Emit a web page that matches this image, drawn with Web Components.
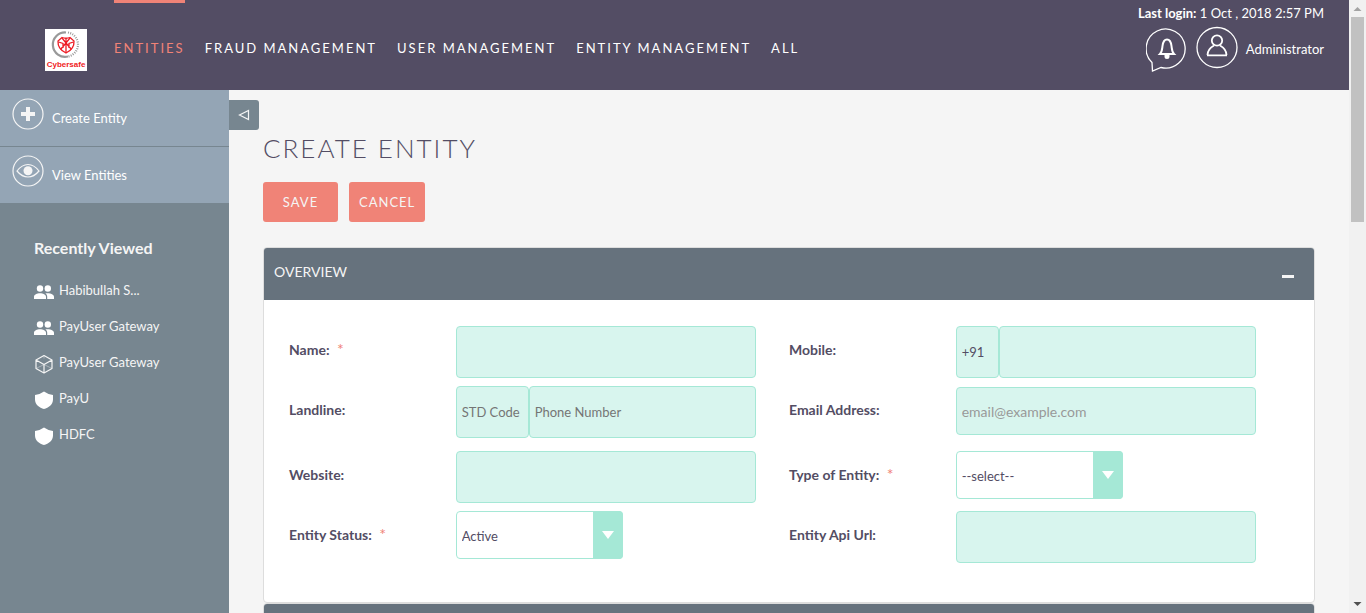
<!DOCTYPE html>
<html lang="en">
<head>
<meta charset="utf-8">
<meta name="viewport" content="width=device-width, initial-scale=1">
<title>Create Entity</title>
<style>
  html, body { margin: 0; height: 100%; }
  body {
    font: 13px/20px Lato, sans-serif;
    color: #534d64;
    background: #f5f5f5;
    overflow: hidden;
  }
</style>
</head>
<body>
<app-shell>
  <top-bar slot="header">
    <nav-link href="#entities" active>ENTITIES</nav-link>
    <nav-link href="#fraud">FRAUD MANAGEMENT</nav-link>
    <nav-link href="#users">USER MANAGEMENT</nav-link>
    <nav-link href="#entity">ENTITY MANAGEMENT</nav-link>
    <nav-link href="#all">ALL</nav-link>
  </top-bar>
  <side-bar slot="side">
    <side-action slot="actions" icon="plus" href="#create">Create Entity</side-action>
    <side-action slot="actions" icon="eye" href="#view">View Entities</side-action>
    <recent-item icon="people" href="#r1">Habibullah S...</recent-item>
    <recent-item icon="people" href="#r2">PayUser Gateway</recent-item>
    <recent-item icon="cube" href="#r3">PayUser Gateway</recent-item>
    <recent-item icon="shield" href="#r4">PayU</recent-item>
    <recent-item icon="shield" href="#r5">HDFC</recent-item>
  </side-bar>
  <entity-page>
    <action-button slot="buttons">SAVE</action-button>
    <action-button slot="buttons">CANCEL</action-button>
    <form-panel heading="OVERVIEW">
      <form-field label="Name:" name="name" required></form-field>
      <form-field label="Mobile:" name="mobile" prefix-value="+91" prefix-width="43"></form-field>
      <form-field label="Landline:" name="landline" prefix-placeholder="STD Code" prefix-width="73" placeholder="Phone Number"></form-field>
      <form-field label="Email Address:" name="email" type="email" placeholder="email@example.com"></form-field>
      <form-field label="Website:" name="website"></form-field>
      <form-field label="Type of Entity:" name="type" options="--select--" required></form-field>
      <form-field label="Entity Status:" name="status" options="Active,Inactive" required></form-field>
      <form-field label="Entity Api Url:" name="api"></form-field>
    </form-panel>
    <form-panel heading=""></form-panel>
  </entity-page>
  <scroll-track slot="scroll"></scroll-track>
</app-shell>

<script>
const ICONS = {
  plus: `<svg width="32" height="32" viewBox="0 0 32 32" fill="none" stroke="#f5f5f5"><circle cx="16" cy="16" r="15" stroke-width="1.2"/><path d="M16 9v14M9 16h14" stroke-width="4"/></svg>`,
  eye: `<svg width="32" height="32" viewBox="0 0 32 32" fill="none" stroke="#f5f5f5"><circle cx="16" cy="16" r="15" stroke-width="1.2"/><path d="M5 16Q10 9.500 16 9.500T27 16Q22 22 16 22T5 16Z" stroke-width="1.200"/><circle cx="16" cy="15.700" r="4.500" fill="#f5f5f5" stroke="none"/></svg>`,
  people: `<svg width="20" height="20" viewBox="0 0 20 20" fill="#fff"><circle cx="6" cy="6.500" r="3.200"/><circle cx="13.800" cy="6.500" r="3.200"/><path d="M0 17v-2.200C0 12.500 3 11.300 6 11.300s6 1.200 6 3.500V17zM13.200 17v-2.200c0-1.500-.7-2.500-1.900-3.200.8-.2 1.700-.3 2.500-.3 3 0 6.200 1.200 6.200 3.500V17z"/></svg>`,
  cube: `<svg width="20" height="20" viewBox="0 0 20 20" fill="none" stroke="#f5f5f5"><path d="M10 1.500 18 6v8.500L10 19l-8-4.500V6zM2 6l8 4.500L18 6M10 10.500V19" stroke-width="1.200" stroke-linejoin="round"/><path d="M2 14.500l8-4 8 4M10 1.500v3" stroke-width=".4"/></svg>`,
  shield: `<svg width="20" height="20" viewBox="0 0 20 20" fill="#fff"><path d="M10 1.500Q14.500 4.700 19 5v4.500c0 5-4.500 8.500-9 9.500-4.500-1-9-4.500-9-9.500V5q4.500-.3 9-3.500z"/></svg>`
};

function define(name, render) {
  customElements.define(name, class extends HTMLElement {
    constructor() {
      super();
      this.attachShadow({ mode: 'open' });
    }
    connectedCallback() {
      const t = document.createElement('template');
      t.innerHTML = render(this);
      this.shadowRoot.replaceChildren(t.content.cloneNode(true));
    }
  });
}

define('app-shell', () => `<style>
  :host { display: grid; grid-template-columns: minmax(0, 1fr) 17px; height: 100vh; }
  .app { display: grid; grid-template: auto minmax(0, 1fr) / 229px minmax(0, 1fr); min-height: 0; }
  header { grid-column: 1 / -1; }
  aside { display: grid; }
  main { overflow: hidden; }
</style>
<div class="app">
  <header><slot name="header"></slot></header>
  <aside><slot name="side"></slot></aside>
  <main><slot></slot></main>
</div>
<slot name="scroll"></slot>`);

define('top-bar', () => `<style>
  :host { display: flex; justify-content: space-between; height: 90px; background: #534d64; color: #fff; }
  .left { display: flex; padding-left: 45px; }
  .logo { display: block; margin: 29px 27px 0 0; height: 42px; }
  nav { display: flex; gap: 20px; }
  .right { display: flex; flex-direction: column; align-items: flex-end; padding: 3px 25px 0 0; }
  .user { display: flex; align-items: center; margin-top: 3px; }
  .user svg { display: block; }
  button { all: unset; cursor: pointer; margin-right: 8px; }
</style>
<div class="left">
  <a class="logo" href="#home" aria-label="Home">
    <svg width="42" height="42" viewBox="0 0 42 42">
      <rect width="42" height="42" fill="#fff"/>
      <path d="M21 3.500a12.200 12.200 0 1 0 2 24" fill="none" stroke="#999" stroke-width="2.200"/>
      <path d="M23 3.500a12.200 12.200 0 0 1 0 24" fill="none" stroke="#999" stroke-width="2.200" stroke-dasharray="1 1.300"/>
      <g fill="none" stroke="#ed1c24" stroke-width="1.300">
        <path d="M17 8.500q4 1.500 8 0l4 3.500q.5 8-8 12-8.500-4-8-12z"/>
        <path d="M21 9v14.500M17 9l4 5 4-5M13.500 13l4.500 1.500v4.500M28.500 13l-4.500 1.500v4.500M21 14l-5.500 6.500M21 14l5.500 6.500"/>
      </g>
      <text x="21" y="38" text-anchor="middle" font-family="Liberation Sans, sans-serif" font-weight="700" font-size="8" fill="#f01c24">Cybersafe</text>
    </svg>
  </a>
  <nav><slot></slot></nav>
</div>
<div class="right">
  <div><b>Last login:</b> 1 Oct , 2018 2:57 PM</div>
  <div class="user">
    <button aria-label="Notifications"><svg width="42" height="46" viewBox="0 0 42 46" fill="none" stroke="#fff" stroke-width="1.300">
      <path d="M6 36.500A19.500 19.500 0 1 1 15 41.500L6.500 45z"/>
      <path d="M14 28c2-2 2-4 2.500-8 .5-4 2-6.500 4.500-6.500s4 2.500 4.500 6.500c.5 4 .5 6 2.500 8z" stroke-width="2"/>
      <path d="M18.500 29h5v1.500a2.500 2.500 0 0 1-5 0z" fill="#fff" stroke="none"/>
    </svg></button>
    <button aria-label="Profile"><svg width="42" height="46" viewBox="0 0 42 46" fill="none" stroke="#fff" stroke-width="1.300">
      <circle cx="21" cy="21.500" r="20"/>
      <circle cx="21" cy="14.500" r="5.200" stroke-width="1.800"/>
      <path d="M11.500 29c0-5 3-7.500 6.500-9.500M30.500 29c0-5-3-7.500-6.500-9.500M11 29.300h20" stroke-width="1.800"/>
    </svg></button>
    <span>Administrator</span>
  </div>
</div>`);

define('nav-link', el => `<style>
  :host { display: block; }
  a { display: block; padding-top: 35px; border-top: 3px solid transparent; color: #fff; letter-spacing: 2px; text-decoration: none; white-space: nowrap; }
  :host([active]) a { color: #f08377; border-color: #f08377; }
</style><a href="${el.getAttribute('href')}"><slot></slot></a>`);

define('side-bar', () => `<style>
  :host { display: block; background: #778690; color: #f5f5f5; }
  .actions { display: grid; gap: 1px; }
  h2 { margin: 35px 34px 22px; font-size: 16px; line-height: 20px; font-weight: 700; }
  .list { display: grid; gap: 16px; padding-left: 34px; }
</style>
<div class="actions"><slot name="actions"></slot></div>
<h2>Recently Viewed</h2>
<div class="list"><slot></slot></div>`);

define('side-action', el => `<style>
  :host { display: block; background: #94a5b5; }
  a { display: flex; gap: 8px; height: 56px; padding-left: 12px; color: #fff; text-decoration: none; }
  svg { margin-top: 8px; }
  span { margin-top: 18px; }
</style><a href="${el.getAttribute('href')}">${ICONS[el.getAttribute('icon')]}<span><slot></slot></span></a>`);

define('recent-item', el => `<style>
  :host { display: block; }
  a { display: flex; gap: 5px; height: 20px; color: #f5f5f5; text-decoration: none; }
  svg { margin-top: 2px; }
</style><a href="${el.getAttribute('href')}">${ICONS[el.getAttribute('icon')]}<span><slot></slot></span></a>`);

define('entity-page', () => `<style>
  :host { display: block; padding-top: 10px; }
  .toggle { display: grid; place-items: center; width: 30px; height: 30px; padding: 0; border: 0; border-radius: 0 3px 3px 0; background: #778690; cursor: pointer; }
  .content { padding: 0 34px; }
  h1 { margin: 2px 0 18px; font-size: 26px; line-height: 32px; font-weight: 300; letter-spacing: 2px; }
  .buttons { display: flex; gap: 11px; margin-bottom: 25px; }
</style>
<button class="toggle" aria-label="Collapse sidebar"><svg width="12" height="12" viewBox="0 0 12 12" fill="none" stroke="#f5f5f5" stroke-width="1.200"><path d="M10.500 1.500v9L1.500 6z"/></svg></button>
<div class="content">
  <h1>CREATE ENTITY</h1>
  <div class="buttons"><slot name="buttons"></slot></div>
  <slot></slot>
</div>`);

define('action-button', () => `<style>
  :host { display: block; }
  button { height: 40px; min-width: 75px; padding: 0 10px; border: 0; border-radius: 3px; background: #f08377; color: #f5f5f5; font: inherit; letter-spacing: 1px; cursor: pointer; }
</style><button type="button"><slot></slot></button>`);

define('form-panel', el => `<style>
  :host { display: block; border: 1px solid #dddddd; border-radius: 4px; background: #fff; overflow: hidden; }
  header { display: flex; justify-content: space-between; height: 52px; box-sizing: border-box; padding: 14px 20px 0 10px; background: #66727d; color: #f5f5f5; }
  h2 { margin: 0; font-size: 14px; line-height: 20px; font-weight: 400; }
  button { all: unset; width: 12px; height: 3px; margin-top: 13px; background: #f5f5f5; cursor: pointer; }
  form { display: grid; grid-template: 52px 57px 52px 52px / 1fr 1fr; row-gap: 8px; padding: 26px 25px 39px; }
</style>
<header><h2>${el.getAttribute('heading')}</h2><button aria-label="Collapse section"></button></header>
<form><slot></slot></form>`);

define('form-field', el => {
  const a = n => el.getAttribute(n) || '';
  const id = a('name');
  const prefix = a('prefix-width')
    ? `<input class="prefix" style="width:${a('prefix-width')}px" value="${a('prefix-value')}" placeholder="${a('prefix-placeholder')}" aria-label="${a('label')} code">`
    : '';
  const control = a('options')
    ? `<div class="select"><select id="${id}">${a('options').split(',').map(o => `<option>${o}</option>`).join('')}</select><span class="arrow"></span></div>`
    : `${prefix}<input class="main" id="${id}" type="${a('type') || 'text'}" placeholder="${a('placeholder')}">`;
  return `<style>
  :host { display: grid; grid-template-columns: 5fr 9fr 1fr; align-items: start; }
  label { font-size: 14px; font-weight: 700; line-height: 48px; }
  i { margin-left: 4px; color: #f08377; font-size: 16px; line-height: 20px; font-style: normal; font-weight: 400; }
  .control { display: flex; min-width: 0; }
  input, select { box-sizing: border-box; height: 52px; min-width: 0; margin: 0; padding: 0 5px; border: 1px solid #a5e8d6; border-radius: 4px; background: #d8f5ee; color: #534d64; font: inherit; outline: 0; }
  input::placeholder { color: #757575; opacity: 1; }
  input[type=email] { height: 48px; margin-top: 1px; font-size: 14px; }
  input[type=email]::placeholder { color: #999; }
  .main { flex: 1; }
  .prefix { flex: none; }
  .select { display: grid; grid-template-columns: 137px 30px; }
  select { grid-area: 1 / 1 / 2 / 3; height: 48px; padding-top: 2px; appearance: none; background: #fff; }
  .arrow { grid-area: 1 / 2; display: grid; place-items: center; border-radius: 0 4px 4px 0; background: #a5e8d6; pointer-events: none; }
  .arrow::before { content: ""; border: 6px solid transparent; border-top: 8px solid #fff; border-bottom: 0; }
</style>
<label for="${id}">${a('label')}${el.hasAttribute('required') ? ' <i>*</i>' : ''}</label>
<div class="control">${control}</div>`;
});

define('scroll-track', () => `<style>
  :host { display: flex; flex-direction: column; align-items: center; background: #f1f1f1; }
  svg { flex: none; }
  .thumb { width: 13px; height: 205px; background: #c1c1c1; }
  .space { flex: 1; }
</style>
<svg width="17" height="17" viewBox="0 0 17 17"><path d="M4.500 11 8.500 7l4 4z" fill="#a3a3a3"/></svg>
<div class="thumb"></div><div class="space"></div>
<svg width="17" height="17" viewBox="0 0 17 17"><path d="M4.500 6l4 4 4-4z" fill="#505050"/></svg>`);
</script>
</body>
</html>
